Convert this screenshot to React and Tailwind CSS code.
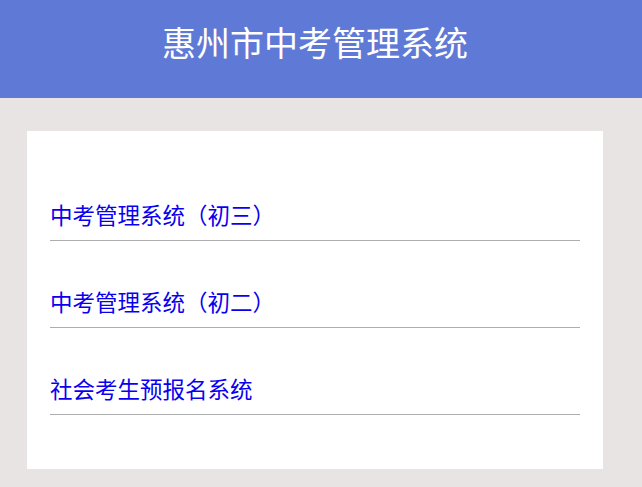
const LINKS = ['中考管理系统（初三）', '中考管理系统（初二）', '社会考生预报名系统']

export default function App() {
  return (
    <div className="min-h-[487px] bg-[#e8e4e3] font-['Noto_Sans_CJK_SC',sans-serif]">
      {/* Header */}
      <div className="h-[98px] bg-[#5f7ad6] flex justify-center pt-[19px] pr-[12px]">
        <h1 className="text-[34px] leading-[46px] text-white font-normal">惠州市中考管理系统</h1>
      </div>

      {/* Card */}
      <div className="mx-[27px] mt-[33px] w-[576px] h-[338px] bg-white px-[23px] pt-[23px]">
        {LINKS.map(label => (
          <a
            key={label}
            href="#"
            className="h-[87px] flex items-end pb-[10px] border-b border-[#adadad] text-[22.5px] leading-[32px] text-[#0a00f0]"
          >
            {label}
          </a>
        ))}
      </div>
    </div>
  )
}
